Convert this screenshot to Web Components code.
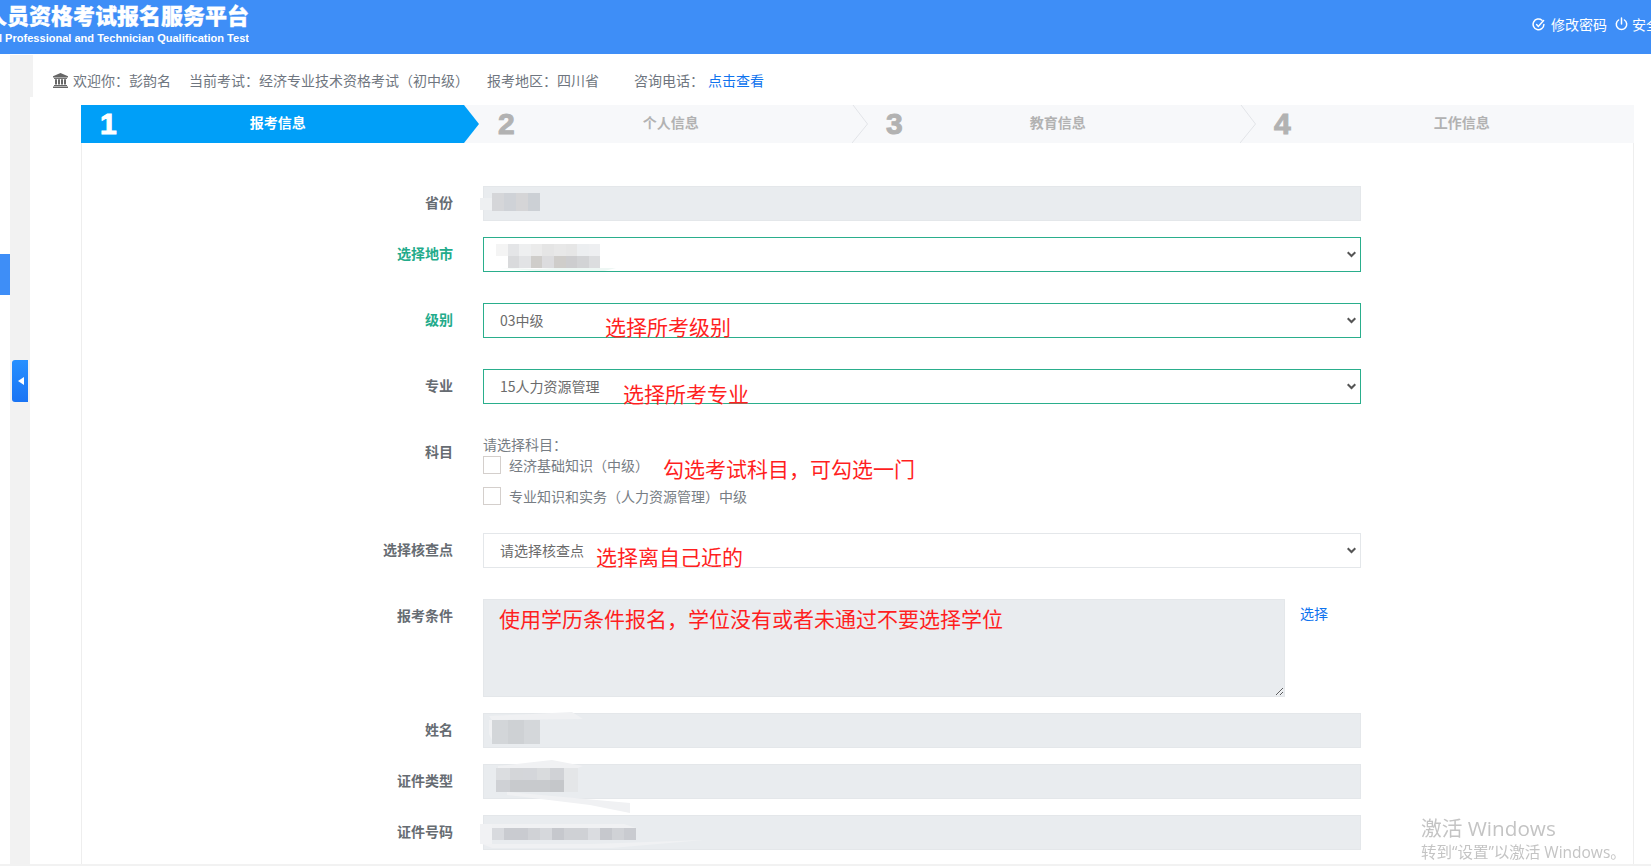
<!DOCTYPE html>
<html lang="zh-CN">
<head>
<meta charset="utf-8">
<title>报考信息</title>
<style>
  html, body { margin: 0; height: 866px; overflow: hidden; background: #fff; }
  body { font-family: "Noto Sans CJK SC", "Liberation Sans", sans-serif; font-size: 14px; color: #6f7680; }
</style>
</head>
<body>
<exam-header></exam-header>
<exam-shell>
  <welcome-bar></welcome-bar>
  <exam-panel>
    <exam-steps slot="steps">
      <step-item num="1" active style="--pad:19px;--label-gap:133px">报考信息</step-item>
      <step-item num="2" style="--pad:34px;--label-gap:128px">个人信息</step-item>
      <step-item num="3" chevron style="--pad:34px;--label-gap:127px">教育信息</step-item>
      <step-item num="4" chevron style="--pad:34px;--label-gap:143px">工作信息</step-item>
    </exam-steps>

    <exam-row label="省份" first>
      <locked-field>
        <blur-patch x="-4" y="11" cell="12" h="12" rows="#eef0f2"></blur-patch>
        <blur-patch x="8" y="6" cell="12" h="18" rows="#d5d6d9,#cfd2d7,#d5d5d7,#ccd0d5"></blur-patch>
      </locked-field>
    </exam-row>
    <exam-row label="选择地市" tone="ok">
      <pick-field>
        <blur-patch x="13" y="7" h="12" cell="11.6" rows="#f4f4f4,#e4e5e7,#eeeff0,#ebebeb,#e5e5e5,#e8e8e8,#e6e6e6,#eceef0,#eeeff1|#ffffff,#d9dadc,#e2e3e5,#cfcdca,#dcdcde,#cfcdca,#cdcdcf,#d2d3d5,#dcdddf" smear="M4,24 L40,25 L60,24 L120,24 L108,27 L40,27Z" tint="#eef7f4"></blur-patch>
      </pick-field>
    </exam-row>
    <exam-row label="级别" tone="ok" spaced>
      <pick-field value="03中级"><red-note x="122" y="11">选择所考级别</red-note></pick-field>
    </exam-row>
    <exam-row label="专业" spaced>
      <pick-field value="15人力资源管理"><red-note x="140" y="12">选择所考专业</red-note></pick-field>
    </exam-row>
    <exam-row label="科目" spaced>
      <subject-list>
        <check-line>经济基础知识（中级）</check-line>
        <check-line>专业知识和实务（人力资源管理）中级</check-line>
        <red-note x="180" y="22">勾选考试科目，可勾选一门</red-note>
      </subject-list>
    </exam-row>
    <exam-row label="选择核查点" spaced>
      <pick-field value="请选择核查点" tone="plain"><red-note x="113" y="11">选择离自己近的</red-note></pick-field>
    </exam-row>
    <exam-row label="报考条件" spaced>
      <condition-field><red-note x="16" y="7">使用学历条件报名，学位没有或者未通过不要选择学位</red-note></condition-field>
    </exam-row>
    <exam-row label="姓名">
      <locked-field>
        <blur-patch x="8" y="6" cell="16" h="24" rows="#d3d6d9,#ced1d4,#d4d7da" smear="M-3,-4 L40,-6 L80,-8 L91,-1 L0,0Z M-3,0 L0,0 L0,20 L-3,14Z"></blur-patch>
      </locked-field>
    </exam-row>
    <exam-row label="证件类型">
      <locked-field>
        <blur-patch x="12" y="3" h="12" cell="13.6" rows="#dbdde0,#d4d6d9,#d4d6da,#d9dbdd,#d0d2d6,#e4e6e8|#cfd1d5,#c8cacd,#c8cacd,#c8cacd,#c5c7ca,#e4e6e8" smear="M11,24 L134,35 L134,45 L94,37 L11,27Z M2,-2 L56,-8 L87,-2 L82,0 L2,0Z"></blur-patch>
      </locked-field>
    </exam-row>
    <exam-row label="证件号码">
      <locked-field>
        <blur-patch x="-4" y="8" cell="12" h="20" rows="#f1f2f4"></blur-patch>
        <blur-patch x="8" y="12" h="12" cell="12" rows="#d8dade,#c9cbd0,#c9cbd0,#d0d2d6,#d6d8dc,#c6c8cd,#cfd1d5,#cfd1d5,#dadce0,#c6c8cd,#d0d2d6,#c9cbd0" smear="M-10,16 L100,16 L212,12 L120,20 L0,20Z M0,-4 L132,-4 L144,0 L0,0Z"></blur-patch>
      </locked-field>
    </exam-row>
  </exam-panel>
</exam-shell>
<windows-watermark></windows-watermark>

<script>
// top bar with the platform title, clipped on the left like the real window
class ExamHeader extends HTMLElement {
  connectedCallback() {
    this.attachShadow({mode: 'open'}).innerHTML = `
      <style>
        :host { display: flex; height: 54px; background: #3e8ef7; color: #fff; overflow: hidden; }
        .brand { flex: none; width: 249px; overflow: hidden; display: flex; flex-direction: column; align-items: flex-end; }
        .cn { font-size: 22px; font-weight: 900; line-height: 22px; margin-top: 3px; white-space: nowrap; -webkit-text-stroke: .3px #fff; }
        .en { font: 700 11.05px/14px "Liberation Sans", sans-serif; margin-top: 6px; white-space: nowrap; }
        nav { flex: none; margin-left: 1283px; display: flex; align-items: center; height: 48px; font-size: 14px; white-space: nowrap; }
        nav svg { flex: none; }
        nav span { margin: 0 8px 0 6px; }
        nav span:last-child { margin-left: 4px; }
      </style>
      <div class="brand">
        <div class="cn">人员资格考试报名服务平台</div>
        <div class="en">National Professional and Technician Qualification Test</div>
      </div>
      <nav>
        <svg width="13" height="13" viewBox="0 0 13 13" fill="none" stroke="#fff" stroke-width="1.5" stroke-linecap="round">
          <path d="M10 2.2A5.4 5.4 0 1 0 11.9 6.5"/><path d="M4.6 6.6l1.7 1.8L11.6 2.6"/>
        </svg>
        <span>修改密码</span>
        <svg width="13" height="14" viewBox="0 0 13 14" fill="none" stroke="#fff" stroke-width="1.5" stroke-linecap="round">
          <path d="M6.5 1v6"/><path d="M3.6 3A5.2 5.2 0 1 0 9.4 3"/>
        </svg>
        <span>安全退出</span>
      </nav>`;
  }
}

// grey gutter + blue rail and the main column
class ExamShell extends HTMLElement {
  connectedCallback() {
    this.attachShadow({mode: 'open'}).innerHTML = `
      <style>
        :host { display: flex; height: 809px; margin-top: 1px; border-bottom: 2px solid #f2f2f2; }
        .rail { flex: none; width: 10px; padding-top: 199px; box-sizing: border-box; }
        .rail i { display: block; height: 41px; background: #3e8ef7; }
        .gutter { flex: none; width: 20px; background: #f2f2f2; padding: 305px 2px 0; box-sizing: border-box; }
        .toggle { height: 42px; border-radius: 3px 0 0 3px; background: linear-gradient(#2690ff, #1a74f4); display: flex; align-items: center; padding-left: 6px; }
        .toggle b { width: 0; height: 0; border: 4px solid transparent; border-left: 0; border-right: 6px solid #fff; }
        main { flex: 1; min-width: 0; }
      </style>
      <div class="rail"><i></i></div>
      <div class="gutter"><div class="toggle"><b></b></div></div>
      <main><slot></slot></main>`;
  }
}

class WelcomeBar extends HTMLElement {
  connectedCallback() {
    this.attachShadow({mode: 'open'}).innerHTML = `
      <style>
        :host { display: flex; align-items: center; height: 30px; border-left: 3px solid #f2f2f2; padding: 10px 0 2px 20px; margin-bottom: 8px; font-size: 14px; color: #6f7680; white-space: nowrap; }
        svg { margin-right: 5px; }
        span { display: block; }
        a { color: #0f73ee; text-decoration: none; }
      </style>
      <svg width="15" height="15" viewBox="0 0 15 15" fill="#666">
        <path d="M7.5 0L15 3.2V4.4H0V3.2z"/><path d="M1 4.9h13v1H1z"/>
        <path d="M2 6.2h2v5.4H2zM5 6.2h2v5.4H5zM8 6.2h2v5.4H8zM11 6.2h2v5.4h-2z"/>
        <path d="M1 11.9h13v1.1H1zM0 13.4h15V15H0z"/>
      </svg>
      <span style="width:116px">欢迎你：彭韵名</span>
      <span style="width:298px">当前考试：经济专业技术资格考试（初中级）</span>
      <span style="width:147px">报考地区：四川省</span>
      <span style="width:74px">咨询电话：</span>
      <a href="#">点击查看</a>`;
  }
}

class ExamPanel extends HTMLElement {
  connectedCallback() {
    this.attachShadow({mode: 'open'}).innerHTML = `
      <style>
        :host { display: block; width: 1553px; height: 759px; margin-left: 51px; box-sizing: border-box; border: solid #eeeeee; border-width: 0 1px; }
        .steps { margin: 0 -1px; }
        form { display: flex; flex-direction: column; }
      </style>
      <div class="steps"><slot name="steps"></slot></div>
      <form><slot></slot></form>`;
  }
}

class ExamSteps extends HTMLElement {
  connectedCallback() {
    this.attachShadow({mode: 'open'}).innerHTML = `
      <style>
        :host { display: flex; height: 38px; background: #f7f8fa; }
      </style>
      <slot></slot>`;
  }
}

class StepItem extends HTMLElement {
  connectedCallback() {
    const chevron = this.hasAttribute('chevron') ? `
      <svg width="16" height="38" viewBox="0 0 16 38" fill="none" stroke="#e2e4e8"><path d="M1 0L15.5 19L0 38"/></svg>` : '';
    this.attachShadow({mode: 'open'}).innerHTML = `
      <style>
        :host { display: flex; align-items: center; position: relative; flex: none; width: 388px; height: 38px; box-sizing: border-box; padding-left: var(--pad); color: #b2b2b2; }
        :host([active]) { width: 398px; margin-right: -15px; color: #fff; background: #009ff8; clip-path: polygon(0 0, 383px 0, 398px 19px, 383px 38px, 0 38px); z-index: 1; }
        :host(:last-child) { width: 395px; }
        .num { font: 900 30px/38px "Liberation Sans", sans-serif; -webkit-text-stroke: 1px currentColor; }
        .label { margin-left: var(--label-gap); font-size: 14px; font-weight: 700; line-height: 38px; margin-top: -5px; white-space: nowrap; }
        svg { position: absolute; left: 0; top: 0; }
      </style>
      ${chevron}
      <span class="num">${this.getAttribute('num')}</span>
      <span class="label"><slot></slot></span>`;
  }
}

class ExamRow extends HTMLElement {
  connectedCallback() {
    this.attachShadow({mode: 'open'}).innerHTML = `
      <style>
        :host { display: grid; grid-template-columns: 371px 878px; column-gap: 30px; margin-top: 16px; }
        :host([first]) { margin-top: 43px; }
        :host([spaced]) { margin-top: 31px; }
        .label { font-size: 14px; font-weight: 700; line-height: 33px; text-align: right; color: #666c72; }
        :host([tone="ok"]) .label { color: #23ab8b; }
        .body { position: relative; }
      </style>
      <div class="label">${this.getAttribute('label')}</div>
      <div class="body"><slot></slot></div>`;
  }
}

class LockedField extends HTMLElement {
  connectedCallback() {
    this.attachShadow({mode: 'open'}).innerHTML = `
      <style>
        :host { display: block; position: relative; height: 35px; box-sizing: border-box; background: #e9ecef; border: 1px solid #e4e7ea; }
      </style>
      <slot></slot>`;
  }
}

class PickField extends HTMLElement {
  connectedCallback() {
    const value = this.getAttribute('value') || '';
    const color = this.getAttribute('tone') === 'plain' ? '#e4e7ea' : '#2aae8c';
    this.attachShadow({mode: 'open'}).innerHTML = `
      <style>
        :host { display: block; position: relative; height: 35px; }
        select { appearance: none; width: 100%; height: 35px; box-sizing: border-box; padding: 0 16px 2px; font: inherit; font-size: 14px; color: #6b6b6b; background: #fff; border: 1px solid ${color}; border-radius: 0; outline: 0; }
        svg { position: absolute; right: 5px; top: 14px; pointer-events: none; }
      </style>
      <select><option>${value}</option></select>
      <svg width="9" height="7" viewBox="0 0 9 7" fill="none" stroke="#555" stroke-width="2"><path d="M.7 1.2L4.5 5 8.3 1.2"/></svg>
      <slot></slot>`;
  }
}

class SubjectList extends HTMLElement {
  connectedCallback() {
    this.attachShadow({mode: 'open'}).innerHTML = `
      <style>
        :host { display: block; position: relative; height: 68px; font-size: 14px; color: #777d84; }
        .hint { line-height: 20px; margin: -1px 0 2px; }
      </style>
      <div class="hint">请选择科目：</div>
      <slot></slot>`;
  }
}

class CheckLine extends HTMLElement {
  connectedCallback() {
    this.attachShadow({mode: 'open'}).innerHTML = `
      <style>
        :host { display: flex; align-items: flex-start; height: 31px; }
        i { flex: none; width: 18px; height: 18px; box-sizing: border-box; border: 1px solid #d4cfcc; background: #fff; margin-right: 8px; }
        span { line-height: 20px; margin-top: -1px; }
      </style>
      <i></i><span><slot></slot></span>`;
  }
}

class ConditionField extends HTMLElement {
  connectedCallback() {
    this.attachShadow({mode: 'open'}).innerHTML = `
      <style>
        :host { display: flex; position: relative; align-items: flex-start; gap: 15px; height: 98px; }
        textarea { flex: none; display: block; width: 802px; height: 98px; box-sizing: border-box; background: #e9ecef; border: 1px solid #e4e7ea; outline: 0; margin: 0; resize: both; }
        a { margin-top: 4px; line-height: 20px; font-size: 14px; color: #0f73ee; text-decoration: none; }
      </style>
      <textarea readonly></textarea>
      <a href="#">选择</a>
      <slot></slot>`;
  }
}

// red remark typed on top of the screenshot
class RedNote extends HTMLElement {
  connectedCallback() {
    this.attachShadow({mode: 'open'}).innerHTML = `
      <style>
        :host { position: absolute; left: ${this.getAttribute('x')}px; top: ${this.getAttribute('y')}px; font-size: 21px; line-height: 24px; color: #ff1f1f; white-space: nowrap; z-index: 2; }
      </style>
      <slot></slot>`;
  }
}

// mosaic that hides private data, rows are split by | and cells by ,
class BlurPatch extends HTMLElement {
  connectedCallback() {
    const rows = this.getAttribute('rows').split('|').map(r => r.split(','));
    const cell = this.getAttribute('cell');
    let cells = '';
    rows.forEach(row => {
      row.forEach(color => {
        cells += `<i style="background:${color}"></i>`;
      });
    });
    const d = this.getAttribute('smear');
    const tint = this.getAttribute('tint') || '#f0f1f3';
    const smear = d ? `<svg width="1" height="1"><path d="${d}" fill="${tint}"/></svg>` : '';
    this.attachShadow({mode: 'open'}).innerHTML = `
      <style>
        :host { position: absolute; z-index: 0; left: ${this.getAttribute('x')}px; top: ${this.getAttribute('y')}px; display: grid; grid-template-columns: repeat(${rows[0].length}, ${cell}px); grid-auto-rows: ${this.getAttribute('h')}px; }
        i { display: block; }
        svg { position: absolute; left: 0; top: 0; overflow: visible; z-index: -1; }
      </style>
      ${smear}${cells}`;
  }
}

class WindowsWatermark extends HTMLElement {
  connectedCallback() {
    this.attachShadow({mode: 'open'}).innerHTML = `
      <style>
        :host { position: fixed; left: 1421px; top: 815px; color: #c4c4c4; font-family: "Open Sans", "Noto Sans CJK SC", sans-serif; white-space: nowrap; }
        div { line-height: 26px; font-size: 20.7px; }
        p { margin: 0; line-height: 22px; font-size: 15.5px; }
      </style>
      <div>激活 Windows</div>
      <p>转到“设置”以激活 Windows。</p>`;
  }
}

customElements.define('exam-header', ExamHeader);
customElements.define('exam-shell', ExamShell);
customElements.define('welcome-bar', WelcomeBar);
customElements.define('exam-panel', ExamPanel);
customElements.define('exam-steps', ExamSteps);
customElements.define('step-item', StepItem);
customElements.define('exam-row', ExamRow);
customElements.define('locked-field', LockedField);
customElements.define('pick-field', PickField);
customElements.define('subject-list', SubjectList);
customElements.define('check-line', CheckLine);
customElements.define('condition-field', ConditionField);
customElements.define('red-note', RedNote);
customElements.define('blur-patch', BlurPatch);
customElements.define('windows-watermark', WindowsWatermark);
</script>
</body>
</html>
